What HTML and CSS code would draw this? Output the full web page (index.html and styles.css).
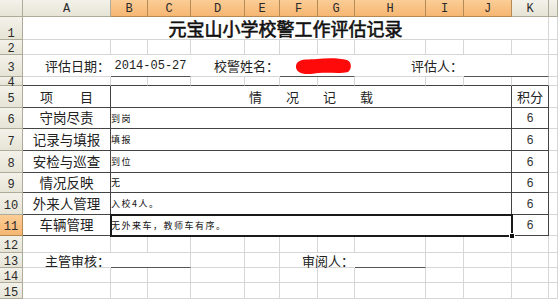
FILE: index.html
```html
<!DOCTYPE html>
<html lang="zh">
<head>
<meta charset="utf-8">
<title>元宝山小学校警工作评估记录</title>
<link rel="stylesheet" href="styles.css">
</head>
<body>
<table class="sheet">
  <colgroup>
    <col class="w-hd"><col class="w-a"><col class="w-b"><col class="w-c"><col class="w-d"><col class="w-e"><col class="w-f"><col class="w-g"><col class="w-h"><col class="w-i"><col class="w-j"><col class="w-k"><col class="w-l">
  </colgroup>
  <thead>
    <tr class="r0">
      <th class="ch"></th><th class="ch">A</th><th class="ch sel">B</th><th class="ch sel">C</th><th class="ch sel">D</th><th class="ch sel">E</th><th class="ch sel">F</th><th class="ch sel">G</th><th class="ch sel">H</th><th class="ch sel">I</th><th class="ch sel">J</th><th class="ch">K</th><th class="ch"></th>
    </tr>
  </thead>
  <tbody>
    <tr class="r1">
      <th class="rh rh-low">1</th><td colspan="11" class="title">元宝山小学校警工作评估记录</td><td></td>
    </tr>
    <tr class="r2">
      <th class="rh">2</th><td></td><td></td><td></td><td></td><td></td><td></td><td></td><td></td><td></td><td></td><td></td><td></td>
    </tr>
    <tr class="r3">
      <th class="rh">3</th>
      <td class="lbl nv">评估日期：</td>
      <td colspan="2" class="ul date nv">2014-05-27</td>
      <td colspan="2" class="lbl nv">校警姓名：</td>
      <td colspan="2" class="ul nv"><svg class="redact" width="58" height="18" viewBox="0 0 58 18"><path d="M2 6 C6 1 14 3 22 2 C32 1 44 1 52 3 C57 5 57 12 53 15 C44 17 34 15 24 16 C16 17 8 18 4 15 C1 13 0 9 2 6 Z" fill="#ff0a0a"/></svg></td>
      <td colspan="2" class="lbl nv">评估人：</td>
      <td colspan="2" class="ul"></td>
      <td></td>
    </tr>
    <tr class="r4">
      <th class="rh">4</th><td class="tt"></td><td class="tt"></td><td class="tt"></td><td class="tt"></td><td class="tt"></td><td class="tt"></td><td class="tt"></td><td class="tt"></td><td class="tt"></td><td class="tt"></td><td class="tt"></td><td></td>
    </tr>
    <tr class="r5">
      <th class="rh">5</th>
      <td class="bx item"><div class="spread sp-item"><span>项</span><span>目</span></div></td>
      <td colspan="9" class="bx"><div class="spread sp-rec"><span>情</span><span>况</span><span>记</span><span>载</span></div></td>
      <td class="bx mid">积分</td>
      <td></td>
    </tr>
    <tr class="r6">
      <th class="rh">6</th><td class="bx item">守岗尽责</td><td colspan="9" class="bx note">到岗</td><td class="bx score">6</td><td></td>
    </tr>
    <tr class="r7">
      <th class="rh">7</th><td class="bx item">记录与填报</td><td colspan="9" class="bx note">填报</td><td class="bx score">6</td><td></td>
    </tr>
    <tr class="r8">
      <th class="rh">8</th><td class="bx item">安检与巡查</td><td colspan="9" class="bx note">到位</td><td class="bx score">6</td><td></td>
    </tr>
    <tr class="r9">
      <th class="rh">9</th><td class="bx item">情况反映</td><td colspan="9" class="bx note">无</td><td class="bx score">6</td><td></td>
    </tr>
    <tr class="r10">
      <th class="rh">10</th><td class="bx item">外来人管理</td><td colspan="9" class="bx note">入校4人。</td><td class="bx score">6</td><td></td>
    </tr>
    <tr class="r11">
      <th class="rh sel">11</th><td class="bx item">车辆管理</td><td colspan="9" class="bx note active">无外来车，教师车有序。<span class="handle"></span></td><td class="bx score">6</td><td></td>
    </tr>
    <tr class="r12">
      <th class="rh">12</th><td></td><td></td><td></td><td></td><td></td><td></td><td></td><td></td><td></td><td></td><td></td><td></td>
    </tr>
    <tr class="r13">
      <th class="rh">13</th>
      <td class="lbl nv">主管审核：</td>
      <td colspan="2" class="ul"></td>
      <td></td><td></td>
      <td colspan="2" class="lbl nv">审阅人：</td>
      <td class="ul"></td>
      <td></td><td></td><td></td><td></td>
    </tr>
    <tr class="r14">
      <th class="rh">14</th><td></td><td></td><td></td><td></td><td></td><td></td><td></td><td></td><td></td><td></td><td></td><td></td>
    </tr>
    <tr class="r15">
      <th class="rh">15</th><td></td><td></td><td></td><td></td><td></td><td></td><td></td><td></td><td></td><td></td><td></td><td></td>
    </tr>
  </tbody>
</table>
</body>
</html>
```
FILE: styles.css
```css
html, body {
  margin: 0;
  background: #fff;
}

.sheet {
  table-layout: fixed;
  width: 558px;
  border-collapse: separate;
  border-spacing: 0;
  font-family: "Noto Sans CJK SC", sans-serif;
  color: #1c1c1c;
}

.sheet td,
.sheet th {
  padding: 0;
  border-right: 1px solid #d6d6d6;
  border-bottom: 1px solid #d6d6d6;
  overflow: visible;
  white-space: nowrap;
  line-height: 1;
  font-weight: normal;
  vertical-align: middle;
}

.w-hd { width: 23px; }
.w-a { width: 88px; }
.w-b { width: 37px; }
.w-c { width: 43px; }
.w-d { width: 54px; }
.w-e { width: 35px; }
.w-f { width: 38px; }
.w-g { width: 37px; }
.w-h { width: 71px; }
.w-i { width: 38px; }
.w-j { width: 48px; }
.w-k { width: 37px; }
.w-l { width: 9px; }

.r0 { height: 17px; }
.r1 { height: 23px; }
.r2 { height: 15px; }
.r3 { height: 22px; }
.r4 { height: 9px; }
.r5 { height: 22px; }
.r6 { height: 21px; }
.r7 { height: 22px; }
.r8 { height: 22px; }
.r9 { height: 20px; }
.r10 { height: 22px; }
.r11 { height: 21px; }
.r12 { height: 17px; }
.r13 { height: 15px; }
.r14 { height: 15px; }
.r15 { height: 16px; }

/* headers */
.sheet .ch,
.sheet .rh {
  background: linear-gradient(#f3f2ea, #e6e4d6);
  border-right: 1px solid #aeab9b;
  border-bottom: 1px solid #aeab9b;
  font-family: "Liberation Mono", monospace;
  font-size: 12px;
  color: #2a2a2a;
  text-align: center;
}

.sheet .ch {
  line-height: 1;
  padding-top: 2px;
}

.sheet .rh {
  line-height: 0;
  padding-top: 4px;
}

.sheet .rh-low {
  padding-top: 12px;
}

.sheet .sel {
  background: linear-gradient(#fbcd96, #f6b672);
  border-right-color: #b58a55;
  border-bottom-color: #b58a55;
}

/* title */
.title {
  text-align: center;
  font-size: 18px;
  font-weight: 700;
  color: #111;
  padding-top: 2px;
  -webkit-text-stroke: 0.6px #111;
}

/* form labels */
.lbl {
  text-align: right;
  font-size: 13px;
  padding-right: 3px;
  color: #222;
}

.sheet .nv {
  border-right-color: #fff;
}

.sheet .ul {
  border-bottom: 1px solid #555;
}

.date {
  text-align: center;
  font-family: "Liberation Mono", monospace;
  font-size: 12px;
  color: #222;
}

.redact {
  display: block;
  margin-left: 15px;
}

/* record table */
.sheet .tt {
  border-bottom-color: #444;
}

.sheet .bx {
  border-right-color: #444;
  border-bottom-color: #444;
}

.item {
  text-align: center;
  font-size: 13.5px;
  color: #222;
}

.spread {
  display: flex;
  justify-content: center;
  font-size: 13px;
  color: #222;
}

.sp-item { gap: 27px; }
.sp-rec { gap: 24px; }

.mid {
  text-align: center;
  font-size: 13px;
  color: #222;
}

.note {
  font-size: 9px;
  letter-spacing: 1.5px;
  padding-left: 2px;
  color: #111;
  font-weight: 700;
}

.score {
  text-align: center;
  font-family: "Liberation Sans", sans-serif;
  font-size: 12px;
  color: #333;
}

.active {
  position: relative;
  outline: 2px solid #1a1a1a;
  outline-offset: -1px;
}

.handle {
  position: absolute;
  right: -4px;
  bottom: -4px;
  width: 4px;
  height: 4px;
  background: #111;
  border: 1px solid #fff;
}
```
